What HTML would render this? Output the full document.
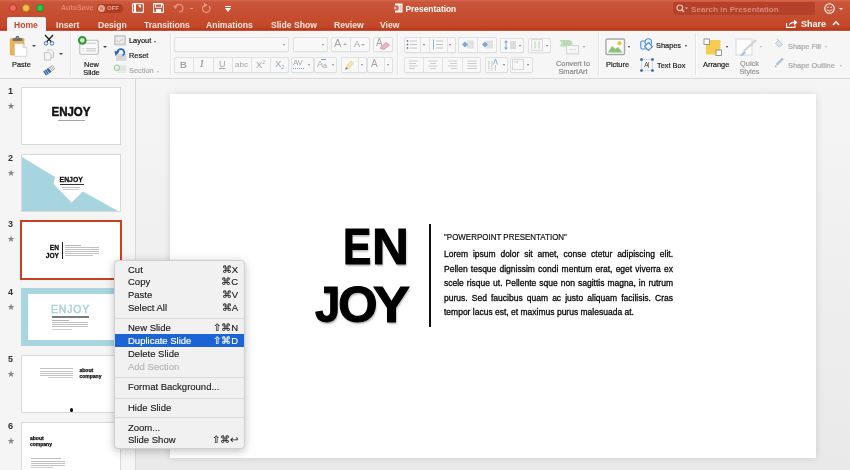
<!DOCTYPE html>
<html><head><meta charset="utf-8">
<style>
*{margin:0;padding:0;box-sizing:border-box}
html,body{width:850px;height:470px;overflow:hidden;background:#e6e6e6;font-family:"Liberation Sans",sans-serif}
body{will-change:transform}
.a{position:absolute}
#top{left:0;top:0;width:850px;height:31px;background:linear-gradient(#d9684c 0px,#ca563b 2px,#c34728 26px,#bd3c1e 29px,#b3361a 30px,#c8735d 31px)}
.tl{width:8px;height:8px;border-radius:50%;top:3px}
.tab{top:19.5px;font-size:8.6px;font-weight:bold;line-height:10px;color:#fbe6de;white-space:nowrap}
#ribbon{left:0;top:31px;width:850px;height:48px;background:#f6f6f6;border-bottom:1px solid #d9d9d9}
.rt{font-size:7.4px;color:#1c1c1c;white-space:nowrap;line-height:9px;-webkit-text-stroke:0.2px currentColor}
.gray{color:#aaa}
.sep{width:1px;background:#e4e4e4;top:33px;height:42px;box-shadow:1px 0 0 #fdfdfd}
.btn{border:1px solid #e0e0e0;border-radius:2px;background:#f8f8f8;box-shadow:0 0.5px 0 #e6e6e6}
#side{left:0;top:79px;width:136px;height:391px;background:#f5f5f5;border-right:1px solid #dadada}
#main{left:136px;top:79px;width:714px;height:391px;background:linear-gradient(#f5f5f5,#e9e9e9)}
.num{font-size:9px;font-weight:bold;color:#333;left:8px;margin-top:-1px}
.star{font-size:9px;color:#858585;left:7px;margin-top:1.5px}
.th{left:21px;width:100px;height:58px;background:#fff;border:1px solid #d9d9d9;overflow:hidden}
#slide{left:170px;top:94px;width:646px;height:364px;background:#fff;box-shadow:0 0 7px rgba(0,0,0,.13)}
#menu{left:114px;top:260px;width:131px;height:189px;background:#f1f1f1;border:1px solid #cfcfcf;border-radius:4px;box-shadow:0 2px 8px rgba(0,0,0,.25)}
.mi{left:13px;font-size:9.5px;color:#222;white-space:nowrap;-webkit-text-stroke:0.15px currentColor}
.ms{right:6px;font-size:9.5px;color:#222;white-space:nowrap;-webkit-text-stroke:0.15px currentColor}
.dn{width:0;height:0;border-left:1.8px solid transparent;border-right:1.8px solid transparent;border-top:2.2px solid #888}
.ic{color:#a5a5a5;white-space:nowrap;line-height:1}
.vl{width:1px;background:#e3e3e3}
.big{font-size:49.5px;font-weight:bold;color:#000;line-height:51px;white-space:nowrap;transform-origin:0 0;text-shadow:1px 2px 2px rgba(0,0,0,.3);-webkit-text-stroke:1px #000}
.para{width:229px;font-size:8.5px;color:#0a0a0a;line-height:14.5px;-webkit-text-stroke:0.3px #0a0a0a}
.ln{text-align:justify;text-align-last:justify;white-space:nowrap;height:14.5px}
.ln.last{text-align-last:left}
.msep{left:0;width:129px;height:1px;background:#dadada}
</style></head><body>
<!-- title bar -->
<div id="top" class="a">
  <div class="a tl" style="left:8.5px;top:3.5px;background:#ec6a5e;border:1px solid #b8372c"></div>
  <div class="a tl" style="left:22px;top:3.5px;background:#f4bf4f;border:1px solid #b9821f"></div>
  <div class="a tl" style="left:35.5px;top:3.5px;background:#32c648;border:1px solid #1f8a2b"></div>
  <div class="a" style="left:7px;top:17px;width:39px;height:14px;background:#f3f3f3;border-radius:2px 2px 0 0"></div>
  <div class="a tab" style="left:14px;color:#c44a33">Home</div>
  <div class="a tab" style="left:56px">Insert</div>
  <div class="a tab" style="left:98px">Design</div>
  <div class="a tab" style="left:144px">Transitions</div>
  <div class="a tab" style="left:206px">Animations</div>
  <div class="a tab" style="left:271px">Slide Show</div>
  <div class="a tab" style="left:334px">Review</div>
  <div class="a tab" style="left:380px">View</div>
  <div class="a" style="left:61px;top:3px;font-size:7.05px;font-weight:bold;color:#e08671;line-height:10px">AutoSave</div>
  <div class="a" style="left:97px;top:4px;width:26px;height:8.5px;border-radius:4.25px;background:#ae3c24"></div>
  <div class="a" style="left:97.5px;top:4.5px;width:7px;height:7px;border-radius:50%;background:#e9a899"></div>
  <div class="a" style="left:99.5px;top:6.5px;width:3px;height:3px;border-radius:50%;background:#d27a66"></div>
  <div class="a" style="left:107px;top:4.5px;font-size:6px;font-weight:bold;color:#e9a899;line-height:7px">OFF</div>
  <svg class="a" style="left:132px;top:3px" width="12" height="10" viewBox="0 0 12 10">
   <rect x="0.6" y="0.6" width="10.8" height="8.8" rx="1" fill="none" stroke="#fff" stroke-width="1.1"/>
   <rect x="2" y="1" width="2" height="8" fill="#fff"/><path d="M6 2 H9 V5 L7.5 4 Z" fill="#fff"/></svg>
  <svg class="a" style="left:153px;top:3px" width="11" height="10" viewBox="0 0 11 10">
   <path d="M0.6 0.6 H9 L10.4 2 V9.4 H0.6 Z" fill="none" stroke="#fff" stroke-width="1.1"/>
   <rect x="2.5" y="1" width="6" height="3.2" fill="none" stroke="#fff" stroke-width="0.9"/>
   <rect x="3" y="6" width="5" height="3" fill="#fff"/></svg>
  <svg class="a" style="left:173px;top:3px" width="12" height="10" viewBox="0 0 12 10">
   <path d="M2.5 4 A3.8 3.8 0 1 1 6 9" fill="none" stroke="#e59a86" stroke-width="1.2"/>
   <path d="M0.5 2.5 L4.5 2.8 L2.2 6.2 Z" fill="#e59a86"/></svg>
  <div class="a" style="left:190px;top:7.5px;width:3px;height:1px;background:#e59a86"></div>
  <svg class="a" style="left:202px;top:3px" width="10" height="10" viewBox="0 0 10 10">
   <path d="M7 3 A3.8 3.8 0 1 1 3 2" fill="none" stroke="#e59a86" stroke-width="1.2"/>
   <path d="M2 0 L5.5 2 L2 4.5 Z" fill="#e59a86"/></svg>
  <div class="a" style="left:224.5px;top:6px;width:6px;height:1px;background:#fff"></div>
  <div class="a" style="left:224.5px;top:8px;width:0;height:0;border-left:3px solid transparent;border-right:3px solid transparent;border-top:4px solid #fff"></div>
  <svg class="a" style="left:393px;top:3px" width="10" height="10" viewBox="0 0 10 10">
   <path d="M2 0.5 H9.5 V9.5 H2 Z" fill="#fff"/><path d="M0.5 2.5 H5.5 V7.5 H0.5 Z" fill="#d9553a"/>
   <path d="M1.5 3.5 L4 5 L1.5 6.5" fill="#fff"/><path d="M6.5 3 H8.5 M6.5 5 H8.5 M6.5 7 H8.5" stroke="#d9553a" stroke-width="0.7"/></svg>
  <div class="a" style="left:405.5px;top:3.5px;font-size:8.4px;color:#fff;font-weight:bold;line-height:10px">Presentation</div>
  <div class="a" style="left:673px;top:2px;width:142px;height:13px;background:#b5412a;border-radius:2px"></div>
  <svg class="a" style="left:676px;top:4px" width="12" height="9" viewBox="0 0 12 9">
   <circle cx="3.8" cy="3.8" r="2.8" fill="none" stroke="#f0c8bd" stroke-width="1.2"/><path d="M5.8 5.8 L8 8" stroke="#f0c8bd" stroke-width="1.4"/>
   <path d="M9 3.5 L12 3.5 L10.5 5.2 Z" fill="#f0c8bd"/></svg>
  <div class="a" style="left:691px;top:3.5px;font-size:8.1px;color:#d9887a;line-height:11px;font-weight:bold">Search in Presentation</div>
  <svg class="a" style="left:824px;top:3px" width="12" height="11" viewBox="0 0 12 11">
   <circle cx="5.5" cy="5.5" r="4.7" fill="none" stroke="#fff" stroke-width="1.1"/>
   <circle cx="4" cy="4.3" r="0.7" fill="#fff"/><circle cx="7" cy="4.3" r="0.7" fill="#fff"/>
   <path d="M3 6.3 A2.7 2.7 0 0 0 8 6.3" fill="none" stroke="#fff" stroke-width="0.9"/></svg>
  <div class="a" style="left:838.5px;top:7.5px;width:0;height:0;border-left:2px solid transparent;border-right:2px solid transparent;border-top:2.5px solid #fff"></div>
  <svg class="a" style="left:786px;top:19px" width="12" height="9" viewBox="0 0 12 9">
   <path d="M0.6 4 V8.4 H9 V6.5" fill="none" stroke="#fff" stroke-width="1.1"/>
   <path d="M3 6.5 C3.5 3.5 5.5 2.8 8 2.8 V0.5 L11.5 3.5 L8 6.5 V4.3 C6 4.3 4.3 4.8 3 6.5 Z" fill="#fff"/></svg>
  <div class="a" style="left:801px;top:19px;font-size:9px;color:#fff;font-weight:bold;line-height:11px">Share</div>
  <svg class="a" style="left:832px;top:20px" width="8" height="6" viewBox="0 0 8 6"><path d="M1 5 L4 1.8 L7 5" fill="none" stroke="#fff" stroke-width="1.5"/></svg>
</div>
<!-- ribbon -->

<div id="ribbon" class="a"></div>
<!-- Paste -->
<svg class="a" style="left:9px;top:35px" width="20" height="23" viewBox="0 0 20 23">
  <rect x="1.3" y="3.5" width="13.7" height="16.5" rx="1" fill="#e9b254" stroke="#d49b3c" stroke-width="0.6"/>
  <path d="M3.7 6 V4 Q3.7 3 5 3 H12 Q13.4 3 13.4 4 V6 Z" fill="#6f6f6f"/>
  <circle cx="8.5" cy="2.6" r="1.9" fill="#6f6f6f"/><circle cx="8.5" cy="2.6" r="0.7" fill="#bbb"/>
  <path d="M5.7 8.7 H13.8 L17.8 12.7 V21.3 H5.7 Z" fill="#fff" stroke="#c9c9c9" stroke-width="0.7"/>
  <path d="M13.8 8.7 V12.7 H17.8" fill="#e3e3e3" stroke="#c9c9c9" stroke-width="0.6"/></svg>
<div class="a rt" style="left:12px;top:60px">Paste</div>
<div class="a" style="left:32px;top:45px;width:0;height:0;border-left:2px solid transparent;border-right:2px solid transparent;border-top:2.5px solid #444"></div>
<!-- scissors -->
<svg class="a" style="left:43px;top:34px" width="12" height="12" viewBox="0 0 12 12">
  <path d="M2 1 L8.5 8 M10 1 L3.5 8" stroke="#222" stroke-width="1.3" fill="none"/>
  <circle cx="3" cy="9.3" r="1.8" fill="none" stroke="#3a78c2" stroke-width="1"/>
  <circle cx="9" cy="9.3" r="1.8" fill="none" stroke="#3a78c2" stroke-width="1"/>
</svg>
<!-- copy -->
<svg class="a" style="left:43px;top:49px" width="12" height="12" viewBox="0 0 12 12">
  <path d="M1.5 3.5 H6 L8 5.5 V11 H1.5 Z" fill="#f5f5f5" stroke="#bcbcbc" stroke-width="0.9"/>
  <path d="M4 1 H8.5 L10.5 3 V8.5 H8" fill="none" stroke="#bcbcbc" stroke-width="0.9"/>
</svg>
<div class="a" style="left:59px;top:53px;width:0;height:0;border-left:2px solid transparent;border-right:2px solid transparent;border-top:2.5px solid #444"></div>
<!-- format painter -->
<svg class="a" style="left:43px;top:64px" width="13" height="12" viewBox="0 0 13 12">
  <g transform="rotate(-35 6.5 6)">
   <rect x="0.5" y="3.5" width="6.5" height="5" fill="#3466ad"/>
   <path d="M2.2 3.5 V8.5 M4.2 3.5 V8.5" stroke="#dfe8f4" stroke-width="0.6"/>
   <rect x="7" y="4" width="4.5" height="4" fill="#f2f2f2" stroke="#9a9a9a" stroke-width="0.7"/>
   <path d="M8.5 4 V8 M10 4 V8" stroke="#9a9a9a" stroke-width="0.5"/>
  </g></svg>
<div class="a sep" style="left:70px"></div>
<!-- New slide -->
<svg class="a" style="left:77px;top:35px" width="23" height="21" viewBox="0 0 23 21">
  <rect x="2.8" y="5.2" width="18.5" height="14" rx="1" fill="#fafafa" stroke="#bdbdbd" stroke-width="1.1"/>
  <rect x="7" y="7.5" width="12" height="1.6" fill="#d3d9e0"/>
  <rect x="9" y="13.2" width="10" height="1.1" fill="#c8c8c8"/><rect x="9" y="15.4" width="10" height="1.1" fill="#c8c8c8"/>
  <rect x="5.5" y="13.2" width="1.5" height="1.1" fill="#c8c8c8"/><rect x="5.5" y="15.4" width="1.5" height="1.1" fill="#c8c8c8"/>
  <circle cx="5.3" cy="5.3" r="3.4" fill="#c4ecba" stroke="#3c8f3c" stroke-width="2"/>
</svg>
<div class="a" style="left:103px;top:46px;width:0;height:0;border-left:2px solid transparent;border-right:2px solid transparent;border-top:2.5px solid #444"></div>
<div class="a rt" style="left:78px;top:60.5px;width:27px;text-align:center;line-height:8px">New<br>Slide</div>
<!-- layout/reset/section -->
<svg class="a" style="left:114px;top:35px" width="12" height="11" viewBox="0 0 12 11">
  <rect x="0" y="0" width="12" height="10.5" rx="1" fill="#cdcdcd"/>
  <rect x="2" y="2" width="8" height="6.5" fill="#ececec"/>
  <path d="M3 5.5 Q5 8 6 6 T9 5" stroke="#bdbdbd" fill="none" stroke-width="0.9"/></svg>
<div class="a rt" style="left:129px;top:36px">Layout</div>
<div class="a" style="left:154px;top:40.5px;width:0;height:0;border-left:1.8px solid transparent;border-right:1.8px solid transparent;border-top:2.2px solid #555"></div>
<svg class="a" style="left:114px;top:48px" width="13" height="13" viewBox="0 0 13 13">
  <rect x="2.5" y="6" width="9.5" height="6.5" fill="#dcdcdc" stroke="#cfcfcf" stroke-width="0.6"/>
  <path d="M4 8.5 H10 M4 10.5 H8" stroke="#c3c3c3" stroke-width="0.7"/>
  <path d="M3.5 4.5 A3.4 3.4 0 1 1 8.5 7.5" stroke="#2366bd" stroke-width="1.6" fill="none"/>
  <path d="M0.5 3 L5.5 3.5 L1.5 8 Z" fill="#2366bd"/></svg>
<div class="a rt" style="left:129px;top:51px">Reset</div>
<svg class="a" style="left:113px;top:63px" width="14" height="11" viewBox="0 0 14 11">
  <rect x="5" y="2" width="8.5" height="8" fill="#e8e8e8"/>
  <path d="M7 4.5 H12 M7 7 H12" stroke="#d5e3ec" stroke-width="1"/>
  <circle cx="3.8" cy="4.8" r="2.6" fill="#f1f1f1" stroke="#a6d1a3" stroke-width="1.3"/></svg>
<div class="a rt gray" style="left:129px;top:66px">Section</div>
<div class="a" style="left:157px;top:71px;width:0;height:0;border-left:1.8px solid transparent;border-right:1.8px solid transparent;border-top:2.2px solid #bbb"></div>
<div class="a sep" style="left:170px"></div>
<!-- font group -->
<div class="a btn" style="left:174px;top:37px;width:115px;height:15px;background:#f8f8f8"></div>
<div class="a dn" style="left:283px;top:44px"></div>
<div class="a btn" style="left:293px;top:37px;width:35px;height:15px;background:#f8f8f8"></div>
<div class="a dn" style="left:322px;top:44px"></div>
<div class="a btn" style="left:331px;top:37px;width:39px;height:15px"></div>
<div class="a" style="left:350px;top:38px;width:1px;height:13px;background:#e2e2e2"></div>
<div class="a ic" style="left:334px;top:38px;font-size:11px">A</div>
<div class="a" style="left:343px;top:43px;width:0;height:0;border-left:2px solid transparent;border-right:2px solid transparent;border-bottom:2.5px solid #aab"></div>
<div class="a ic" style="left:354px;top:39.5px;font-size:9px">A</div>
<div class="a" style="left:361px;top:44px;width:0;height:0;border-left:2px solid transparent;border-right:2px solid transparent;border-top:2.5px solid #aab"></div>
<div class="a btn" style="left:373px;top:37px;width:20px;height:15px"></div>
<div class="a ic" style="left:376px;top:38px;font-size:10px">A</div>
<svg class="a" style="left:378px;top:41px" width="13" height="9" viewBox="0 0 13 9"><path d="M2 7 L8 1.5 L11.5 4 L6 8.5 Z" fill="#e9b7c9" stroke="#d58aa6" stroke-width="0.8"/></svg>
<div class="a btn" style="left:174px;top:57px;width:115px;height:16px"></div>
<div class="a" style="left:193px;top:58px;width:1px;height:14px;background:#e2e2e2"></div>
<div class="a" style="left:213px;top:58px;width:1px;height:14px;background:#e2e2e2"></div>
<div class="a" style="left:232px;top:58px;width:1px;height:14px;background:#e2e2e2"></div>
<div class="a" style="left:251px;top:58px;width:1px;height:14px;background:#e2e2e2"></div>
<div class="a" style="left:270px;top:58px;width:1px;height:14px;background:#e2e2e2"></div>
<div class="a ic" style="left:180px;top:60px;font-weight:bold;font-size:9.5px">B</div>
<div class="a ic" style="left:200px;top:60px;font-style:italic;font-size:9.5px;font-family:'Liberation Serif',serif;font-weight:bold">I</div>
<div class="a ic" style="left:219px;top:59.5px;font-size:9px;text-decoration:underline">U</div>
<div class="a ic" style="left:235px;top:61px;font-size:8px">abc</div>
<div class="a ic" style="left:256px;top:60px;font-size:9.5px">X<sup style="font-size:5px;vertical-align:4px">2</sup></div>
<div class="a ic" style="left:275px;top:59px;font-size:9.5px">X<sub style="font-size:5px;color:#6fa3d8;vertical-align:-2px">2</sub></div>
<div class="a btn" style="left:291px;top:57px;width:23px;height:16px"></div>
<div class="a ic" style="left:293px;top:59px;font-size:8px;letter-spacing:-0.3px">AV</div>
<div class="a" style="left:293px;top:68px;width:11px;height:1px;border-top:1px dotted #6fa3d8"></div>
<div class="a dn" style="left:308px;top:64px"></div>
<div class="a btn" style="left:314px;top:57px;width:23px;height:16px"></div>
<div class="a ic" style="left:317px;top:60px;font-size:9px">A</div>
<div class="a ic" style="left:323px;top:62px;font-size:7px">a</div>
<div class="a" style="left:321px;top:59px;width:5px;height:2px;border-top:1px solid #6fa3d8"></div>
<div class="a dn" style="left:332px;top:64px"></div>
<div class="a btn" style="left:341px;top:57px;width:26px;height:16px"></div>
<div class="a" style="left:358px;top:58px;width:1px;height:14px;background:#e2e2e2"></div>
<svg class="a" style="left:344px;top:58px" width="12" height="12" viewBox="0 0 12 12"><path d="M2 9 L7 3 L9.5 5 L4.5 11 Z" fill="#f6e7a6" stroke="#d6c98e" stroke-width="0.6"/><path d="M2 9 L1 11.5 L4 11" fill="#777"/></svg>
<div class="a dn" style="left:361px;top:64px"></div>
<div class="a btn" style="left:367px;top:57px;width:26px;height:16px"></div>
<div class="a" style="left:384px;top:58px;width:1px;height:14px;background:#e2e2e2"></div>
<div class="a ic" style="left:371px;top:58.5px;font-size:10px">A</div>
<div class="a dn" style="left:387px;top:64px"></div>
<div class="a sep" style="left:397px"></div>
<!-- paragraph group -->
<div class="a btn" style="left:404px;top:37px;width:52px;height:16px"></div>
<div class="a vl" style="left:420px;top:38px;height:14px"></div>
<div class="a vl" style="left:429px;top:38px;height:14px"></div>
<div class="a vl" style="left:447px;top:38px;height:14px"></div>
<svg class="a" style="left:405px;top:39px" width="14" height="11" viewBox="0 0 14 11">
 <circle cx="2.5" cy="2" r="0.9" fill="#6a7f9a"/><circle cx="2.5" cy="5.5" r="0.9" fill="#6a7f9a"/><circle cx="2.5" cy="9" r="0.9" fill="#6a7f9a"/>
 <path d="M5 2 H12 M5 5.5 H12 M5 9 H12" stroke="#c4c4c4" stroke-width="1"/></svg>
<div class="a dn" style="left:423px;top:44px;border-top-color:#777"></div>
<svg class="a" style="left:431px;top:39px" width="14" height="11" viewBox="0 0 14 11">
 <path d="M2.5 0.5 V10.5" stroke="#8fb0d8" stroke-width="1"/>
 <path d="M5 2 H12 M5 5.5 H12 M5 9 H12" stroke="#c4c4c4" stroke-width="1"/></svg>
<div class="a dn" style="left:449px;top:44px;border-top-color:#777"></div>
<div class="a btn" style="left:458px;top:37px;width:39px;height:16px"></div>
<div class="a vl" style="left:477px;top:38px;height:14px"></div>
<svg class="a" style="left:461px;top:39px" width="14" height="11" viewBox="0 0 14 11">
 <rect x="6" y="1.5" width="7" height="8" fill="#e2e2e2"/>
 <path d="M4 2.5 L7 5.5 L4 8.5 L1 5.5 Z" fill="#7ea7d8"/></svg>
<svg class="a" style="left:480px;top:39px" width="14" height="11" viewBox="0 0 14 11">
 <rect x="6" y="1.5" width="7" height="8" fill="#e2e2e2"/>
 <path d="M5 2.5 L8 5.5 L5 8.5 L2 5.5 Z" fill="#7ea7d8"/></svg>
<div class="a btn" style="left:500px;top:38px;width:24px;height:15px"></div>
<svg class="a" style="left:502px;top:39px" width="16" height="12" viewBox="0 0 16 12">
 <path d="M4 1 L6 3.5 H2 Z M4 11 L6 8.5 H2 Z" fill="#7ea7d8"/><path d="M4 3 V9" stroke="#7ea7d8" stroke-width="1"/>
 <rect x="8" y="2" width="6" height="8" fill="#dcdcdc"/></svg>
<div class="a dn" style="left:519px;top:45px;border-top-color:#777"></div>
<div class="a btn" style="left:528px;top:38px;width:23px;height:15px"></div>
<svg class="a" style="left:531px;top:39px" width="13" height="12" viewBox="0 0 13 12">
 <rect x="0.5" y="0.5" width="11" height="11" fill="#f6f6f6" stroke="#dcdcdc"/>
 <path d="M4 2.5 V9.5 M8 2.5 V9.5" stroke="#b8dcb8" stroke-width="1.2"/></svg>
<div class="a dn" style="left:546px;top:45px;border-top-color:#777"></div>
<!-- row2 -->
<div class="a btn" style="left:404px;top:57px;width:77px;height:16px"></div>
<div class="a vl" style="left:423px;top:58px;height:14px"></div>
<div class="a vl" style="left:442px;top:58px;height:14px"></div>
<div class="a vl" style="left:462px;top:58px;height:14px"></div>
<svg class="a" style="left:408px;top:60px" width="12" height="10" viewBox="0 0 12 10"><path d="M1 1 H10 M1 3.5 H8 M1 6 H10 M1 8.5 H7" stroke="#c8c8c8" stroke-width="0.9"/></svg>
<svg class="a" style="left:427px;top:60px" width="12" height="10" viewBox="0 0 12 10"><path d="M1.5 1 H10.5 M3 3.5 H9 M1.5 6 H10.5 M3 8.5 H9" stroke="#c8c8c8" stroke-width="0.9"/></svg>
<svg class="a" style="left:446px;top:60px" width="12" height="10" viewBox="0 0 12 10"><path d="M2 1 H11 M4 3.5 H11 M2 6 H11 M5 8.5 H11" stroke="#c8c8c8" stroke-width="0.9"/></svg>
<svg class="a" style="left:466px;top:60px" width="12" height="10" viewBox="0 0 12 10"><path d="M1 1 H11 M1 3.5 H11 M1 6 H11 M1 8.5 H11" stroke="#c8c8c8" stroke-width="0.9"/></svg>
<div class="a btn" style="left:485px;top:57px;width:23px;height:16px"></div>
<svg class="a" style="left:487px;top:58px" width="14" height="14" viewBox="0 0 14 14">
 <path d="M2 3 V12.5 M5 3 V12.5 M8.5 7 V12.5" stroke="#aaa" stroke-width="0.8" stroke-dasharray="1.5 0.7"/>
 <path d="M6.5 6.5 L8.5 1 L10.5 6.5" stroke="#7ea7d8" stroke-width="0.9" fill="none"/></svg>
<div class="a dn" style="left:503px;top:64px;border-top-color:#777"></div>
<div class="a btn" style="left:510px;top:57px;width:23px;height:16px"></div>
<svg class="a" style="left:512px;top:59px" width="12" height="11" viewBox="0 0 12 11">
 <rect x="0.5" y="0.5" width="11" height="10" fill="#f7f7f7" stroke="#d6d6d6"/><path d="M2.5 3 H6" stroke="#c4c4c4"/></svg>
<div class="a dn" style="left:527px;top:64px;border-top-color:#777"></div>
<!-- smartart -->
<svg class="a" style="left:559px;top:39px" width="22" height="16" viewBox="0 0 22 16">
 <path d="M0.5 1 H11 L14 4 L11 7.5 H0.5 L3 4 Z" fill="#b9dcb0"/>
 <rect x="7.5" y="6.5" width="12" height="8.5" fill="#f6f6f6" stroke="#cfcfcf" stroke-width="0.9"/>
 <path d="M10 10.5 H17" stroke="#ddd"/></svg>
<div class="a dn" style="left:583px;top:45.5px;border-top-color:#999"></div>
<div class="a rt gray" style="left:553px;top:60px;width:40px;text-align:center;line-height:7.6px;color:#8a8a8a">Convert to<br>SmartArt</div>
<div class="a sep" style="left:598px"></div>
<!-- insert group -->
<svg class="a" style="left:605px;top:38px" width="21" height="18" viewBox="0 0 21 18">
 <rect x="1" y="1" width="18.5" height="15.5" rx="1" fill="#fbfbfb" stroke="#a9a9a9" stroke-width="1.4"/>
 <path d="M3 14.5 L7 8 L10.5 11 L13 9 L17.5 14.5 Z" fill="#8cc17c"/>
 <circle cx="14.5" cy="5.2" r="2" fill="#e6c33a"/></svg>
<div class="a dn" style="left:628px;top:46px;border-top-color:#333"></div>
<div class="a rt" style="left:606px;top:60px">Picture</div>
<svg class="a" style="left:636px;top:35px" width="20" height="20" viewBox="0 0 20 20">
 <rect x="4.8" y="6" width="6.5" height="8" rx="1.5" fill="#eef6fd" stroke="#4f8bcf" stroke-width="1.1"/>
 <circle cx="12.3" cy="7" r="3.2" fill="#eef6fd" stroke="#4f8bcf" stroke-width="1.1"/>
 <path d="M12.5 7.5 L16.5 11.5 L12.5 15.5 L8.5 11.5 Z" fill="#eef6fd" stroke="#4f8bcf" stroke-width="1.1"/></svg>
<div class="a rt" style="left:656px;top:41px">Shapes</div>
<div class="a dn" style="left:684.5px;top:44.5px;border-top-color:#333"></div>
<svg class="a" style="left:640px;top:58px" width="14" height="14" viewBox="0 0 14 14">
 <rect x="1.5" y="1.5" width="11" height="11" fill="none" stroke="#9bb4d4" stroke-width="0.7" stroke-dasharray="1.2 0.8"/>
 <rect x="0.3" y="0.3" width="2.4" height="2.4" fill="#2f5f9e"/><rect x="11.3" y="0.3" width="2.4" height="2.4" fill="#2f5f9e"/>
 <rect x="0.3" y="11.3" width="2.4" height="2.4" fill="#2f5f9e"/><rect x="11.3" y="11.3" width="2.4" height="2.4" fill="#2f5f9e"/>
 <text x="4.2" y="8.5" font-size="6.5" font-family="Liberation Sans" fill="#444">A</text>
 <path d="M8.5 4 V10" stroke="#555" stroke-width="0.6"/></svg>
<div class="a rt" style="left:657px;top:61px">Text Box</div>
<div class="a sep" style="left:695px"></div>
<!-- arrange -->
<svg class="a" style="left:703px;top:38px" width="20" height="18" viewBox="0 0 20 18">
 <rect x="3" y="2" width="14.5" height="14.5" fill="#f7cd4f"/>
 <rect x="1" y="1" width="5.5" height="5.5" fill="#fff" stroke="#8a8a8a" stroke-width="0.9"/>
 <rect x="13" y="12" width="5.5" height="5.5" fill="#fff" stroke="#8a8a8a" stroke-width="0.9"/></svg>
<div class="a dn" style="left:726px;top:46px;border-top-color:#333"></div>
<div class="a rt" style="left:703px;top:60px">Arrange</div>
<svg class="a" style="left:735px;top:38px" width="24" height="19" viewBox="0 0 24 19">
 <rect x="1" y="1" width="16" height="16" fill="#fcfcfc" stroke="#d6d6d6" stroke-width="0.9"/>
 <path d="M21 2 L9 13" stroke="#d2d2d2" stroke-width="2.2"/>
 <path d="M9 13 L5 17.5 L7.5 18 L11 14.5 Z" fill="#a6c4e6"/></svg>
<div class="a dn" style="left:760px;top:46px;border-top-color:#bbb"></div>
<div class="a rt gray" style="left:736px;top:60px;width:27px;text-align:center;line-height:8px;color:#999">Quick<br>Styles</div>
<svg class="a" style="left:774px;top:38px" width="10" height="10" viewBox="0 0 10 10">
 <path d="M4.5 2.5 L8.5 6 L5.5 9 L1.5 5.5 Z" fill="#dde6ef" stroke="#a9b9cb" stroke-width="0.8"/>
 <path d="M3 0.8 L5 3" stroke="#a9a9a9" stroke-width="0.8"/></svg>
<div class="a rt gray" style="left:788px;top:41.5px;color:#a8a8a8">Shape Fill</div>
<div class="a dn" style="left:825px;top:45.5px;border-top-color:#bbb"></div>
<svg class="a" style="left:774px;top:58px" width="10" height="10" viewBox="0 0 10 10">
 <path d="M8.5 0.8 L2.5 6.8" stroke="#aac4e4" stroke-width="2.4"/><path d="M9 0.4 L8 1.4" stroke="#bbb" stroke-width="2.2"/>
 <path d="M1.6 7.2 L0.8 9.2 L2.9 8.4 Z" fill="#9a9a9a"/></svg>
<div class="a rt gray" style="left:788px;top:61px;color:#a8a8a8">Shape Outline</div>
<div class="a dn" style="left:840px;top:65px;border-top-color:#bbb"></div>




<!-- sidebar -->
<div id="side" class="a"></div>
<div id="main" class="a"></div>
<div class="a num" style="top:87px">1</div>
<div class="a star" style="top:99px">&#9733;</div>
<div class="a th" style="top:87px">
  <div class="a" style="left:0;top:17px;width:98px;text-align:center;font-size:12.5px;font-weight:bold;color:#111;line-height:14px;transform:scaleX(0.92);-webkit-text-stroke:0.5px #111">ENJOY</div>
  <div class="a" style="left:36px;top:31.5px;width:27px;height:1px;background:#a5a5a5"></div>
</div>
<div class="a num" style="top:154px">2</div>
<div class="a star" style="top:166px">&#9733;</div>
<div class="a th" style="top:154px">
  <svg class="a" style="left:0;top:0" width="98" height="56" viewBox="0 0 98 56">
    <path d="M0 2 L33 22 L31.5 29 L49.5 47.5 L61 36.5 L96 56 L0 56 Z" fill="#a6d5df"/></svg>
  <div class="a" style="left:37px;top:21px;font-size:7.2px;font-weight:bold;color:#111;line-height:8px;transform:scaleX(0.95);-webkit-text-stroke:0.3px #111">ENJOY</div>
  <div class="a" style="left:37.5px;top:29px;width:24px;height:1px;background:#333"></div>
  <div class="a" style="left:40px;top:31.5px;width:18px;height:1px;background:#c2c2c2"></div>
  <div class="a" style="left:41px;top:33.5px;width:16px;height:1px;background:#cfcfcf"></div>
</div>
<div class="a num" style="top:220px">3</div>
<div class="a star" style="top:232px">&#9733;</div>
<div class="a" style="left:20px;top:219.5px;width:102px;height:60px;border:2px solid #c8401e;background:#fff;overflow:hidden">
  <div class="a" style="left:24px;top:22.5px;width:13px;text-align:right;font-size:6.6px;font-weight:bold;color:#111;line-height:7px;-webkit-text-stroke:0.3px #111">EN</div>
  <div class="a" style="left:20px;top:30.5px;width:17px;text-align:right;font-size:6.6px;font-weight:bold;color:#111;line-height:7px;-webkit-text-stroke:0.3px #111">JOY</div>
  <div class="a" style="left:40px;top:20px;width:1px;height:17px;background:#222"></div>
  <div class="a" style="left:43px;top:23px;width:16px;height:1px;background:#b5b5b5"></div>
  <div class="a" style="left:43px;top:25.5px;width:34px;height:1px;background:#c2c2c2"></div>
  <div class="a" style="left:43px;top:27.5px;width:34px;height:1px;background:#c2c2c2"></div>
  <div class="a" style="left:43px;top:29.5px;width:34px;height:1px;background:#c2c2c2"></div>
  <div class="a" style="left:43px;top:31.5px;width:34px;height:1px;background:#c2c2c2"></div>
  <div class="a" style="left:43px;top:33.5px;width:28px;height:1px;background:#c2c2c2"></div>
</div>
<div class="a num" style="top:288px">4</div>
<div class="a star" style="top:300px">&#9733;</div>
<div class="a th" style="top:288px;border:none;background:#a8d5df">
  <div class="a" style="left:6.5px;top:6px;width:92px;height:46px;background:#fff"></div>
  <div class="a" style="left:30px;top:16px;font-size:10.5px;color:#a2d0da;line-height:11px;letter-spacing:0.8px;-webkit-text-stroke:0.4px #a2d0da">ENJOY</div>
  <div class="a" style="left:30.5px;top:28px;width:37px;height:1.5px;background:#7a7a7a"></div>
  <div class="a" style="left:30.5px;top:31.5px;width:17px;height:1px;background:#b5b5b5"></div>
  <div class="a" style="left:30.5px;top:34px;width:36px;height:1px;background:#c2c2c2"></div>
  <div class="a" style="left:30.5px;top:36px;width:36px;height:1px;background:#c2c2c2"></div>
  <div class="a" style="left:30.5px;top:38px;width:36px;height:1px;background:#c2c2c2"></div>
  <div class="a" style="left:30.5px;top:40.5px;width:20px;height:1px;background:#cfcfcf"></div>
</div>
<div class="a num" style="top:355px">5</div>
<div class="a star" style="top:367px">&#9733;</div>
<div class="a th" style="top:355px">
  <div class="a" style="left:18px;top:12px;width:33px;height:1px;background:#c2c2c2"></div>
  <div class="a" style="left:18px;top:14.5px;width:33px;height:1px;background:#c2c2c2"></div>
  <div class="a" style="left:18px;top:16.5px;width:33px;height:1px;background:#c2c2c2"></div>
  <div class="a" style="left:18px;top:18.5px;width:33px;height:1px;background:#c2c2c2"></div>
  <div class="a" style="left:26px;top:21px;width:25px;height:1px;background:#cfcfcf"></div>
  <div class="a" style="left:57.5px;top:11px;font-size:5px;font-weight:bold;color:#111;line-height:6.3px;-webkit-text-stroke:0.25px #111">about<br>company</div>
  <div class="a" style="left:47.5px;top:52px;width:3.5px;height:3.5px;border-radius:50%;background:#111"></div>
</div>
<div class="a num" style="top:422px">6</div>
<div class="a star" style="top:434px">&#9733;</div>
<div class="a th" style="top:422px">
  <div class="a" style="left:8px;top:12px;font-size:5px;font-weight:bold;color:#111;line-height:6.3px;-webkit-text-stroke:0.25px #111">about<br>company</div>
  <div class="a" style="left:8.5px;top:35px;width:30px;height:1px;background:#c2c2c2"></div>
  <div class="a" style="left:8.5px;top:37.5px;width:34px;height:1px;background:#c2c2c2"></div>
  <div class="a" style="left:8.5px;top:39.5px;width:34px;height:1px;background:#c2c2c2"></div>
  <div class="a" style="left:8.5px;top:41.5px;width:34px;height:1px;background:#c2c2c2"></div>
  <div class="a" style="left:8.5px;top:44px;width:22px;height:1px;background:#cfcfcf"></div>
</div>
<!-- slide -->
<div id="slide" class="a">
  <div class="a big" style="left:172.5px;top:126.5px;transform:scaleX(0.86)">E</div>
  <div class="a big" style="left:201.5px;top:126.5px;transform:scaleX(1.03)">N</div>
  <div class="a big" style="left:145px;top:185px;transform:scaleX(0.92)">J</div>
  <div class="a big" style="left:167.5px;top:185px;transform:scaleX(1.03)">O</div>
  <div class="a big" style="left:203px;top:185px;transform:scaleX(1.12)">Y</div>
  
  <div class="a" style="left:259px;top:130px;width:2px;height:103px;background:#111"></div>
  <div class="a" style="left:274px;top:137.5px;font-size:9px;color:#111;line-height:10px;white-space:nowrap;-webkit-text-stroke:0.2px #111;transform:scaleX(0.885);transform-origin:0 0">"POWERPOINT PRESENTATION"</div>
  <div class="a para" style="left:274px;top:153px">
    <div class="ln">Lorem ipsum dolor sit amet, conse ctetur adipiscing elit.</div>
    <div class="ln">Pellen tesque dignissim condi mentum erat, eget viverra ex</div>
    <div class="ln">scele risque ut. Pellente sque non sagittis magna, in rutrum</div>
    <div class="ln">purus. Sed faucibus quam ac justo aliquam facilisis. Cras</div>
    <div class="ln last">tempor lacus est, et maximus purus malesuada at.</div>
  </div>
</div>
<!-- menu -->
<div id="menu" class="a">
  <div class="a mi" style="top:3px">Cut</div><div class="a ms" style="top:3px">&#8984;X</div>
  <div class="a mi" style="top:14.5px">Copy</div><div class="a ms" style="top:14.5px">&#8984;C</div>
  <div class="a mi" style="top:27.5px">Paste</div><div class="a ms" style="top:27.5px">&#8984;V</div>
  <div class="a mi" style="top:40.5px">Select All</div><div class="a ms" style="top:40.5px">&#8984;A</div>
  <div class="a msep" style="top:57px"></div>
  <div class="a mi" style="top:61px">New Slide</div><div class="a ms" style="top:61px">&#8679;&#8984;N</div>
  <div class="a" style="left:0;top:72.5px;width:129px;height:13px;background:#1c63d6"></div>
  <div class="a mi" style="top:73.5px;color:#fff">Duplicate Slide</div><div class="a ms" style="top:73.5px;color:#fff">&#8679;&#8984;D</div>
  <div class="a mi" style="top:87px">Delete Slide</div>
  <div class="a mi" style="top:99.5px;color:#b5b5b5">Add Section</div>
  <div class="a msep" style="top:115.5px"></div>
  <div class="a mi" style="top:119.5px">Format Background...</div>
  <div class="a msep" style="top:136.5px"></div>
  <div class="a mi" style="top:140.5px">Hide Slide</div>
  <div class="a msep" style="top:156px"></div>
  <div class="a mi" style="top:160.5px">Zoom...</div>
  <div class="a mi" style="top:173px">Slide Show</div><div class="a ms" style="top:173px">&#8679;&#8984;&#8617;</div>
</div>
</body></html>
